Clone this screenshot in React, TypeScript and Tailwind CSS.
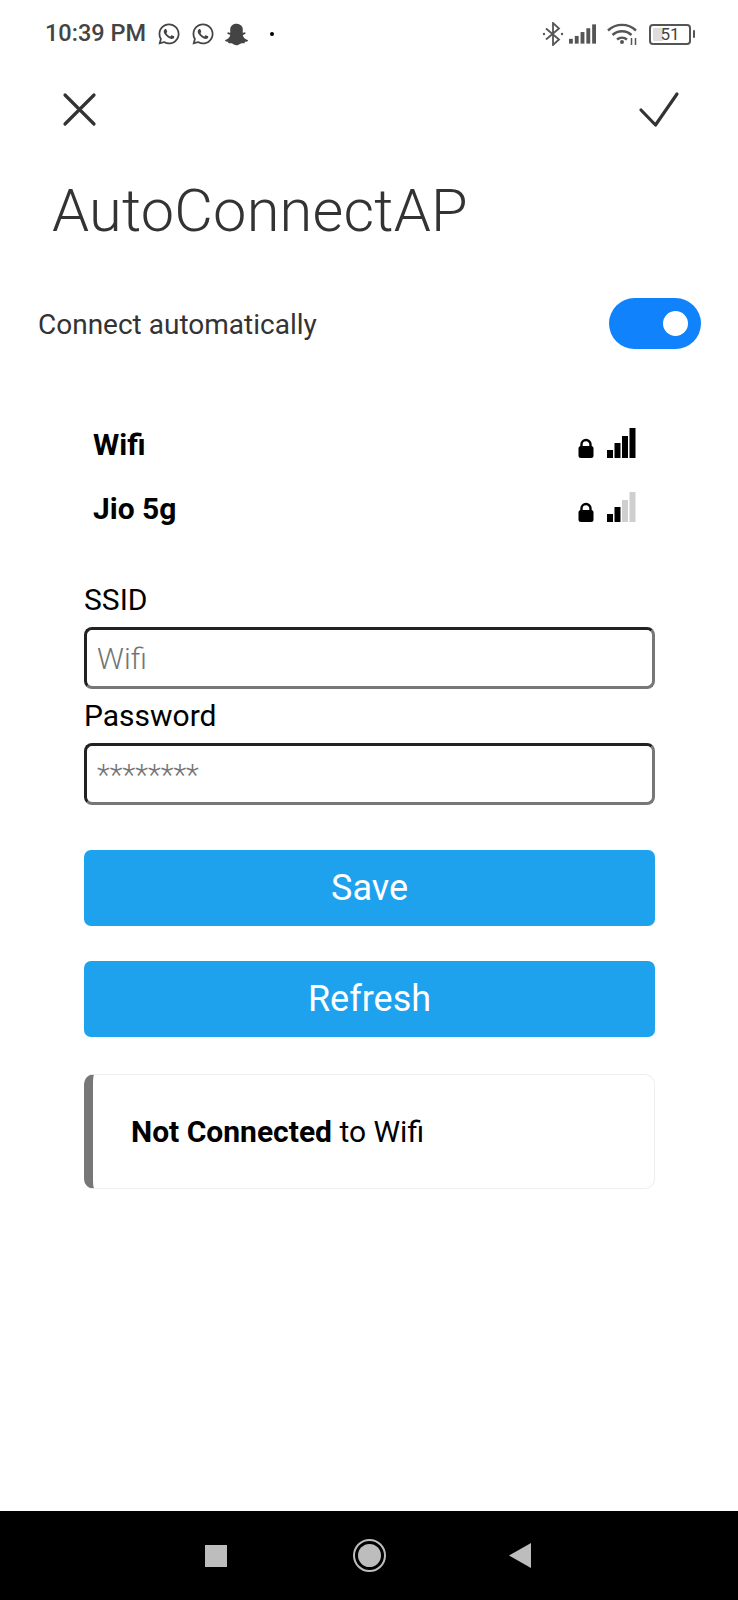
import { FaWhatsapp, FaSnapchatGhost } from 'react-icons/fa'

function Bars({ active }: { active: number }) {
    const bars = [
        { x: 0, h: 8 },
        { x: 7.5, h: 15 },
        { x: 15, h: 22 },
        { x: 22.5, h: 30 },
    ]
    return (
        <svg width="29" height="30" viewBox="0 0 29 30">
            {bars.map((b, i) => (
                <rect key={i} x={b.x} y={30 - b.h} width="6" height={b.h} fill={i < active ? '#000' : '#cfcfcf'} />
            ))}
        </svg>
    )
}

function Lock() {
    return (
        <svg width="16" height="20" viewBox="0 0 16 20">
            <path d="M3.5 9V6.5a4.5 4.5 0 0 1 9 0V9" fill="none" stroke="#000" strokeWidth="2.4" />
            <rect x="0.5" y="8" width="15" height="12" rx="2.5" fill="#000" />
        </svg>
    )
}

function NetworkRow({ name, active }: { name: string; active: number }) {
    return (
        <div className="h-[64px] flex items-center justify-between pl-[93px] pr-[102px]">
            <span className="text-[30px] font-bold text-black">{name}</span>
            <div className="flex items-end gap-[13px] h-[30px] translate-y-[-1px]">
                <Lock />
                <Bars active={active} />
            </div>
        </div>
    )
}

export default function App() {
    return (
        <div className="w-[738px] h-[1600px] bg-white flex flex-col overflow-hidden font-['Roboto',sans-serif]">
            {/* Status bar */}
            <div className="h-[68px] flex items-center justify-between pl-[45px] pr-[43px] text-[#444]">
                <div className="flex items-center">
                    <span className="text-[23.5px] font-medium leading-none">10:39 PM</span>
                    <FaWhatsapp className="ml-[11px] w-[24px] h-[24px]" />
                    <FaWhatsapp className="ml-[10px] w-[24px] h-[24px]" />
                    <FaSnapchatGhost className="ml-[10px] w-[23px] h-[23px]" />
                    <div className="ml-[22px] w-[4px] h-[4px] rounded-full bg-black"></div>
                </div>
                <div className="flex items-center">
                    <svg width="22" height="24" viewBox="0 0 22 24" fill="none" stroke="#555" strokeWidth="1.8">
                        <path d="M4 6.5l13 11-6 5.5V1l6 5.5-13 11" />
                        <circle cx="2" cy="12" r="1.2" fill="#555" stroke="none" />
                        <circle cx="20" cy="12" r="1.2" fill="#555" stroke="none" />
                    </svg>
                    <svg className="ml-[5px]" width="27" height="20" viewBox="0 0 28 20" fill="#555">
                        <rect x="0" y="15" width="4" height="5" />
                        <rect x="6" y="12" width="4" height="8" />
                        <rect x="12" y="8" width="4" height="12" />
                        <rect x="18" y="4" width="4" height="16" />
                        <rect x="24" y="0" width="4" height="20" />
                    </svg>
                    <svg className="ml-[11px]" width="31" height="24" viewBox="0 0 31 24" fill="none" stroke="#555" strokeWidth="2.4">
                        <path d="M1 8.5c8-7.5 20-7.500 28 0" />
                        <path d="M5.500 13c5.500-5 13.500-5 19 0" />
                        <path d="M10 17.500c3-2.500 7-2.500 10 0" />
                        <circle cx="15" cy="20" r="2" fill="#555" stroke="none" />
                        <path d="M24.500 16v7M28.500 16v7" strokeWidth="1.500" />
                    </svg>
                    <div className="ml-[11px] relative w-[42px] h-[21px] rounded-[4px] border-[2px] border-[#555] flex items-center justify-center">
                        <div className="absolute left-[2px] top-[2px] bottom-[2px] w-[10px] rounded-[1px] bg-[#ddd]"></div>
                        <span className="relative text-[17px] leading-none font-normal text-[#444]">51</span>
                    </div>
                    <div className="ml-[2px] w-[2px] h-[8px] bg-[#555] rounded-sm"></div>
                </div>
            </div>

            {/* Header actions */}
            <div className="h-[82px] flex items-center justify-between pl-[60px] pr-[57px] text-[#333]">
                <svg width="39" height="39" viewBox="0 0 39 39" fill="none" stroke="#333" strokeWidth="3.200" strokeLinecap="round">
                    <path d="M5 5l29 29M34 5L5 34" />
                </svg>
                <svg width="44" height="40" viewBox="0 0 44 40" fill="none" stroke="#333" strokeWidth="3.200" strokeLinecap="round" strokeLinejoin="round">
                    <path d="M4 21l14.500 15L40 5" />
                </svg>
            </div>

            <h1 className="h-[123px] pl-[52px] flex items-center text-[59.5px] font-light leading-none text-[#333] tracking-[0.2px]">AutoConnectAP</h1>

            <div className="h-[68px] flex items-center justify-between pl-[38px] pr-[37px] mt-[16px]">
                <span className="text-[28px] font-normal text-[#333] translate-y-[2px]">Connect automatically</span>
                <div className="w-[92px] h-[51px] rounded-full bg-[#0f82fc] flex items-center justify-end pr-[13px]">
                    <div className="w-[25px] h-[25px] rounded-full bg-white"></div>
                </div>
            </div>

            <div className="mt-[55px]">
                <NetworkRow name="Wifi" active={4} />
                <NetworkRow name="Jio 5g" active={2} />
            </div>

            <div className="px-[84px] mt-[42px] w-[739px]">
                <div className="flex flex-col">
                    <label className="h-[36px] text-[30px] font-normal leading-[36px] text-black">SSID</label>
                    <input
                        placeholder="Wifi"
                        className="mt-[9px] h-[62px] w-full rounded-[8px] border-[3px] border-t-[#222] border-l-[#222] border-r-[#777] border-b-[#777] px-[10px] text-[30px] font-light placeholder:text-[#757575] outline-none"
                    />
                    <label className="mt-[9px] h-[36px] text-[30px] font-normal leading-[36px] text-black">Password</label>
                    <input
                        placeholder="********"
                        className="mt-[9px] h-[62px] w-full rounded-[8px] border-[3px] border-t-[#222] border-l-[#222] border-r-[#777] border-b-[#777] px-[10px] text-[30px] font-light placeholder:text-[#757575] outline-none"
                    />
                </div>

                <button className="mt-[45px] w-full h-[76px] rounded-[7px] bg-[#1fa2ee] text-white text-[36px] font-normal">Save</button>
                <button className="mt-[35px] w-full h-[76px] rounded-[7px] bg-[#1fa2ee] text-white text-[36px] font-normal">Refresh</button>

                <div className="mt-[37px] h-[115px] rounded-[10px] border border-[#eeeeee] border-l-[9px] border-l-[#777777] flex items-center pl-[38px]">
                    <p className="text-[30px] font-normal text-black"><strong className="font-bold">Not Connected</strong> to Wifi</p>
                </div>
            </div>

            {/* Navigation bar */}
            <div className="mt-auto h-[89px] bg-black flex items-center">
                <div className="ml-[205px] w-[22px] h-[22px] bg-[#bdbdbd]"></div>
                <div className="ml-[126px] w-[33px] h-[33px] rounded-full border-[2px] border-[#bdbdbd] flex items-center justify-center">
                    <div className="w-[23px] h-[23px] rounded-full bg-[#bdbdbd]"></div>
                </div>
                <svg className="ml-[123px]" width="22" height="25" viewBox="0 0 22 25">
                    <path d="M0 12.500L22 0v25z" fill="#bdbdbd" />
                </svg>
            </div>
        </div>
    )
}
